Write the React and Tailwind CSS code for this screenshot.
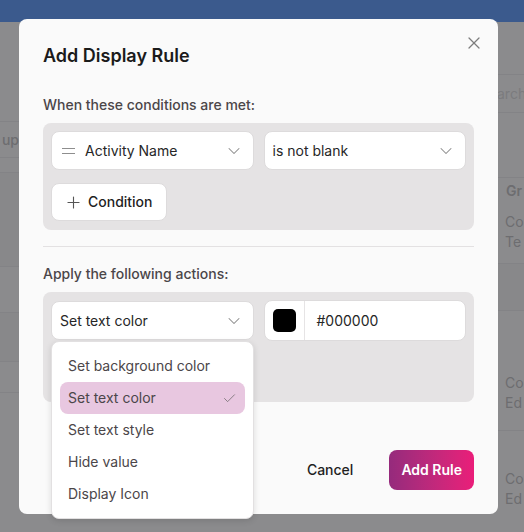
import React from 'react';
import { ChevronDown, Plus, Check, X } from 'lucide-react';

const options = ['Set background color', 'Set text color', 'Set text style', 'Hide value', 'Display Icon'];

function SelectBox({ children, icon, className = '' }) {
  return (
    <div className={`flex h-[39px] items-center rounded-lg border border-[#dddbdc] bg-white pl-2 pr-[9px] ${className}`}>
      {icon}
      <span className="flex-1 truncate text-sm text-[#262626]">{children}</span>
      <ChevronDown size={20} strokeWidth={1.25} className="text-[#8a8a8a]" />
    </div>
  );
}

export default function App() {
  return (
    <div className="relative h-[532px] w-[524px] overflow-hidden bg-[#8b8b8d] font-['Inter','Noto_Sans',sans-serif]">
      {/* page behind the overlay */}
      <div className="h-[22px] bg-[#3b5a8d]" />
      <div className="flex justify-between text-sm text-[#6d6d70]">
        <div className="w-[19px] overflow-hidden">
          <div className="h-[100px] border-b border-[#838386]" />
          <div className="flex h-[36px] items-center justify-end border-b border-[#838386] font-medium">up</div>
          <div className="h-[15px] border-b border-[#838386]" />
          <div className="h-[94px] border-b border-[#838386] bg-[#88888a]" />
          <div className="h-[46px] border-b border-[#838386]" />
          <div className="h-[49px] border-b border-[#838386] bg-[#88888a]" />
          <div className="h-[31px] border-b border-[#838386]" />
        </div>
        <div className="w-[27px] overflow-hidden">
          <div className="h-[53px] border-b border-[#838386]" />
          <div className="flex h-[38px] items-center border-b border-[#838386] text-[#7b7b7e]">arch</div>
          <div className="h-[65px] border-b border-[#838386]" />
          <div className="flex h-[26px] items-center border-l border-[#6f7d99] pl-2 font-semibold">Gr</div>
          <div className="h-[60px] border-b border-[#838386] pl-2 pt-2 leading-5">Co<br />Te</div>
          <div className="h-[47px] border-b border-[#838386] bg-[#88888a]" />
          <div className="h-[120px] border-b border-[#838386] pl-2 pt-[62px] leading-5">Co<br />Ed</div>
          <div className="pl-2 pt-[38px] leading-5">Co<br />Ed</div>
        </div>
      </div>

      {/* modal */}
      <div className="absolute left-[19px] top-[19px] w-[479px] rounded-lg bg-[#fafafa] px-6 pb-6 pt-[23px]">
        <button className="absolute right-[14px] top-[14px] text-[#7d7d7d]">
          <X size={20} strokeWidth={1.5} />
        </button>
        <h2 className="text-lg font-semibold leading-7 text-[#1b1b1b]">Add Display Rule</h2>

        <p className="mt-6 text-sm font-medium leading-[22px] text-[#4b4649]">When these conditions are met:</p>
        <div className="mt-[7px] rounded-lg bg-[#e5e3e4] px-2 pb-[9px] pt-2">
          <div className="grid grid-cols-2 gap-[10px]">
            <SelectBox
              icon={
                <svg width="13" height="8" viewBox="0 0 13 8" className="ml-[2px] mr-[10px]">
                  <path d="M0 1.5h13M0 6.5h13" stroke="#8e8e8e" strokeWidth="1.2" />
                </svg>
              }
            >
              Activity Name
            </SelectBox>
            <SelectBox>is not blank</SelectBox>
          </div>
          <button className="mt-[13px] flex h-[38px] items-center gap-[5px] rounded-lg border border-[#dddbdc] bg-white pl-3 pr-[13px] text-sm font-medium text-[#1f1f1f]">
            <Plus size={19} strokeWidth={1.4} className="text-[#555]" />
            Condition
          </button>
        </div>

        <div className="mt-4 h-px bg-[#e3e1e2]" />

        <p className="mt-4 text-sm font-medium leading-[22px] text-[#4b4649]">Apply the following actions:</p>
        <div className="mt-[7px] h-[110px] rounded-lg bg-[#e5e3e4] px-2 pt-2">
          <div className="grid grid-cols-2 items-center gap-[10px]">
            <div className="relative">
              <SelectBox className="h-[38px]">Set text color</SelectBox>
              <div className="absolute left-0 top-full z-10 mt-[1px] w-[203px] rounded-lg border border-[#e2e0e1] bg-white p-2 shadow-[0_2px_6px_rgba(0,0,0,0.12)]">
                {options.map((o) => (
                  <div
                    key={o}
                    className={`flex h-8 items-center justify-between rounded-lg px-2 text-sm text-[#4b4649] ${o === 'Set text color' ? 'bg-[#e8c7e0]' : ''}`}
                  >
                    {o}
                    {o === 'Set text color' && <Check size={15} strokeWidth={1.25} className="text-[#6f6a6d]" />}
                  </div>
                ))}
              </div>
            </div>
            <div className="flex h-[41px] items-center rounded-lg border border-[#dddbdc] bg-white">
              <div className="flex h-full items-center border-r border-[#e6e4e5] px-2">
                <div className="h-[23px] w-[23px] rounded-[5px] bg-black" />
              </div>
              <span className="pl-3 text-sm text-[#262626]">#000000</span>
            </div>
          </div>
        </div>

        <div className="mt-12 flex items-center justify-end gap-5">
          <button className="h-10 px-4 text-sm font-medium text-[#1f1f1f]">Cancel</button>
          <button className="h-10 rounded-lg bg-gradient-to-r from-[#952a7c] to-[#ea1d79] px-3 text-sm font-semibold text-white">
            Add Rule
          </button>
        </div>
      </div>
    </div>
  );
}
